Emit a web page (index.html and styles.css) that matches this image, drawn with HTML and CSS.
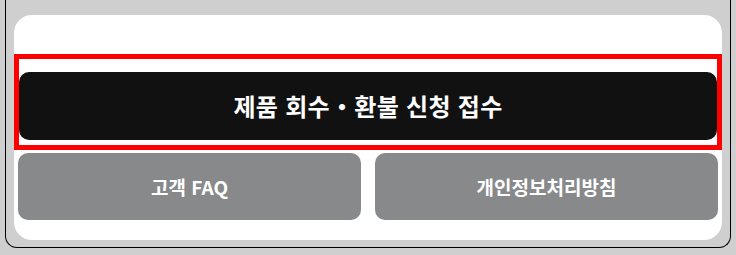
FILE: index.html
```html
<!doctype html>
<html lang="ko">
  <head>
    <meta charset="UTF-8" />
    <meta name="viewport" content="width=device-width, initial-scale=1.0" />
    <title>고객 지원</title>
    <link rel="stylesheet" href="styles.css">
  </head>
  <body>
    <div class="frame">
      <div class="card">
        <div class="highlight">
          <p class="primary">제품 회수・환불 신청 접수</p>
        </div>
        <div class="links">
          <p class="link">고객 FAQ</p>
          <p class="link">개인정보처리방침</p>
        </div>
      </div>
    </div>
  </body>
</html>
```

FILE: styles.css
```css
* {
  box-sizing: border-box;
}
body {
  margin: 0;
  background: #cfcfcf;
  font-family: "Noto Sans CJK KR", "Noto Sans", sans-serif;
}
.frame {
  margin: 0 5px;
  height: 248px;
  padding: 15px 8px 0;
  border: 1px solid #000;
  border-top: none;
  border-radius: 0 0 12px 12px;
}
.card {
  height: 225px;
  padding-top: 39px;
  background: #ffffff;
  border-radius: 18px;
}
.highlight {
  padding: 13px 0 5px;
  border: 5px solid #ff0000;
}
.primary {
  margin: 0;
  height: 68px;
  line-height: 68px;
  text-align: center;
  font-size: 24px;
  font-weight: 700;
  letter-spacing: 0.3px;
  color: #ffffff;
  background: #111111;
  border-radius: 10px;
}
.links {
  display: flex;
  gap: 14px;
  padding: 3px 4px 0;
}
.link {
  flex: 1;
  margin: 0;
  height: 67px;
  line-height: 67px;
  text-align: center;
  font-size: 19px;
  font-weight: 700;
  color: #ffffff;
  background: #88898b;
  border-radius: 10px;
}
```
